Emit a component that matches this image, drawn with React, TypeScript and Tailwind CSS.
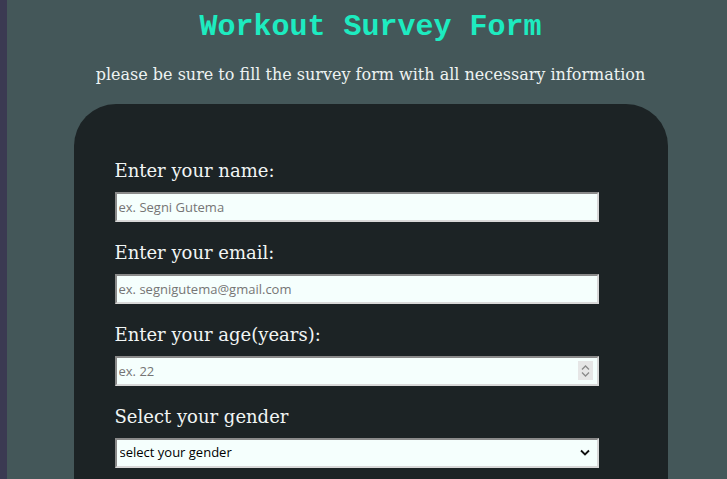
import React from 'react';

const serif = { fontFamily: '"DejaVu Serif", "Liberation Serif", serif' };

const Field = ({ label, children }: { label: string; children: React.ReactNode }) => (
  <div className="flex flex-col mb-[19px]">
    <label className="text-[18px] leading-[24px] text-[#f1f5f4] mb-[9px]" style={serif}>
      {label}
    </label>
    {children}
  </div>
);

const inputCls =
  "block w-[484px] h-[30px] bg-[#f5fffd] border-2 border-t-[#8a8a8a] border-l-[#8a8a8a] border-r-[#d8d8d8] border-b-[#d8d8d8] px-[2px] text-[13px] text-black placeholder:text-[#757575] outline-none font-['Open_Sans','Noto_Sans',sans-serif]";

// chromium hides the spinner until hover, the screenshot shows it
const Spinner = () => (
  <div className="absolute right-[6px] top-[5px] w-[15px] h-[19px] bg-[#e6e6e6] flex flex-col items-center justify-center gap-[2px] pointer-events-none">
    <svg width="9" height="5" viewBox="0 0 9 5" fill="none" stroke="#8a8a8a" strokeWidth="1.3">
      <path d="M1 4.5 4.5 1 8 4.5" />
    </svg>
    <svg width="9" height="5" viewBox="0 0 9 5" fill="none" stroke="#8a8a8a" strokeWidth="1.3">
      <path d="M1 0.5 4.5 4 8 0.5" />
    </svg>
  </div>
);

export default function App() {
  return (
    <div className="flex min-h-[479px] bg-[#445759]">
      <div className="w-[7px] shrink-0 bg-[#3b3a52]" />
      <main className="flex-1 pl-[7px] flex flex-col items-center">
        <h1 className="mt-[8px] text-[30px] leading-[38px] font-bold text-[#1debc0] font-['Liberation_Mono',monospace]">
          Workout Survey Form
        </h1>
        <p className="mt-[18px] text-[16px] leading-[22px] text-[#eef3f2]" style={serif}>
          please be sure to fill the survey form with all necessary information
        </p>
        <form className="mt-[18px] w-[594px] bg-[#1c2325] rounded-t-[42px] pt-[55px] pl-[41px] pb-10">
          <Field label="Enter your name:">
            <input type="text" placeholder="ex. Segni Gutema" className={inputCls} />
          </Field>
          <Field label="Enter your email:">
            <input type="email" placeholder="ex. segnigutema@gmail.com" className={inputCls} />
          </Field>
          <Field label="Enter your age(years):">
            <div className="relative w-[484px]">
              <input
                type="number"
                placeholder="ex. 22"
                className={inputCls + " [appearance:textfield] [&::-webkit-inner-spin-button]:appearance-none"}
              />
              <Spinner />
            </div>
          </Field>
          <Field label="Select your gender">
            <div className="relative w-[484px]">
              <select className={inputCls + " appearance-none pl-[3px]"} defaultValue="">
                <option value="">select your gender</option>
                <option value="male">male</option>
                <option value="female">female</option>
              </select>
              <svg
                className="absolute right-[9px] top-[11px] pointer-events-none"
                width="10" height="7" viewBox="0 0 10 7" fill="none" stroke="#111" strokeWidth="1.8"
              >
                <path d="M1 1.5 5 5.5 9 1.5" />
              </svg>
            </div>
          </Field>
        </form>
      </main>
    </div>
  );
}
